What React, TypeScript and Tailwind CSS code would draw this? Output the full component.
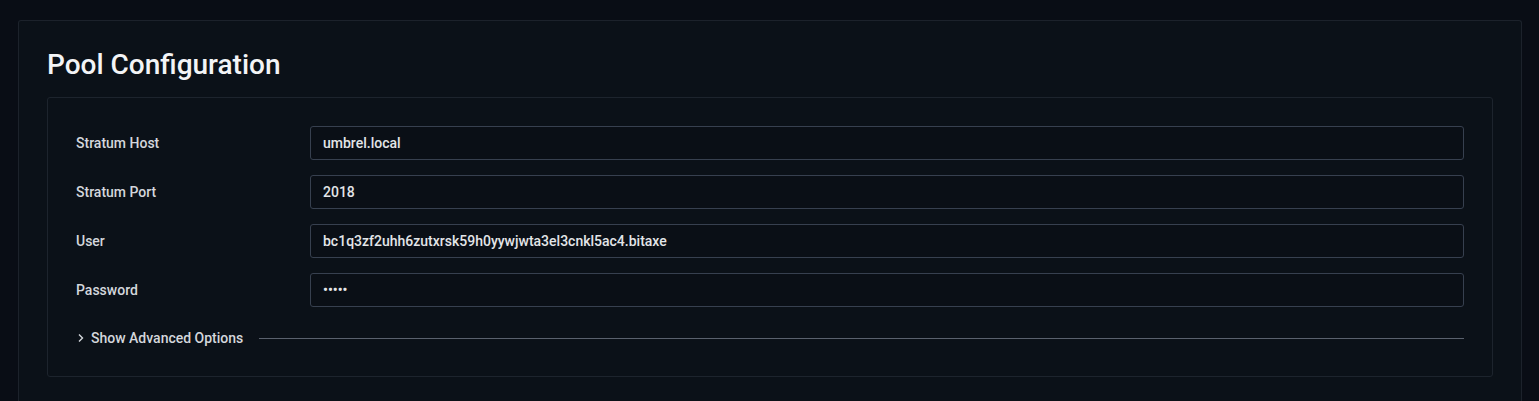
const fields = [
  { label: 'Stratum Host', value: 'umbrel.local', type: 'text' },
  { label: 'Stratum Port', value: '2018', type: 'text' },
  { label: 'User', value: 'bc1q3zf2uhh6zutxrsk59h0yywjwta3el3cnkl5ac4.bitaxe', type: 'text' },
  { label: 'Password', value: 'xxxxx', type: 'password' },
];

export default function App() {
  return (
    <div className="min-h-screen bg-[#090d15] pt-5 pl-[18px] pr-[17px] font-['Roboto',sans-serif]">
      <div className="rounded-t-[3px] border border-b-0 border-[#1c222b] bg-[#0b1118] px-[28px] pt-[28px] pb-10">
        <h2 className="mb-[16px] text-[28px] font-medium leading-8 text-[#f3f4f6]">
          Pool Configuration
        </h2>

        <div className="rounded-[3px] border border-[#1d242d] bg-[#0b1118] p-[28px]">
          <div className="flex flex-col gap-[15px]">
            {fields.map((field) => (
              <div key={field.label} className="flex items-center">
                <label className="w-[234px] shrink-0 text-[14px] font-medium text-[#d4d7dc]">
                  {field.label}
                </label>
                <input
                  type={field.type}
                  defaultValue={field.value}
                  readOnly
                  className="h-[34px] flex-1 rounded-[3px] border border-[#37404f] bg-[#0a0f16] px-3 text-[14px] font-medium text-[#e3e5e8] outline-none"
                />
              </div>
            ))}
          </div>

          <div className="mt-[21px] flex h-5 items-center">
            <svg width="10" height="10" viewBox="0 0 10 10" className="mr-[5px] text-[#d4d7dc]">
              <path d="M3 1.5 L6.5 5 L3 8.5" fill="none" stroke="currentColor" strokeWidth="1.4" />
            </svg>
            <span className="text-[14px] font-medium text-[#d4d7dc]">Show Advanced Options</span>
            <div className="ml-[16px] h-px flex-1 bg-[#5a616d]" />
          </div>
        </div>
      </div>
    </div>
  );
}
